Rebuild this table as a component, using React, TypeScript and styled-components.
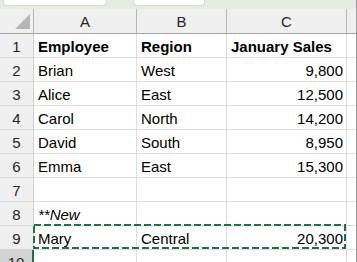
import React from "react";
import styled, { createGlobalStyle } from "styled-components";

const GlobalStyle = createGlobalStyle`
  html, body {
    margin: 0;
    padding: 0;
    background: #ffffff;
    overflow: hidden;
  }
  * { box-sizing: border-box; }
`;

const Frame = styled.div`
  width: 357px;
  height: 262px;
  overflow: hidden;
  border-right: 1px solid #9c9c9c;
  font-family: "Liberation Sans", Arial, sans-serif;
  background: #ffffff;
`;

const TopStrip = styled.div`
  height: 9px;
  background: #e5ede3;
  display: flex;
  align-items: flex-start;
  padding-left: 3px;
  gap: 26px;
`;

const StripBox = styled.div<{ $w: number }>`
  width: ${(p) => p.$w}px;
  height: 6px;
  background: #ffffff;
  border: 1px solid #d3d8d2;
  border-top: none;
  border-radius: 0 0 4px 4px;
`;

const Sheet = styled.div`
  position: relative;
  display: grid;
  grid-template-columns: 34px 103px 90px 120px 9px;
  grid-template-rows: 25px;
  grid-auto-rows: 24px;
`;

const Corner = styled.div`
  background: #f0f0f0;
  border-right: 1px solid #b8b8b8;
  border-bottom: 1px solid #a3a3a3;
  display: flex;
  align-items: flex-start;
  justify-content: flex-start;
`;

const ColHeader = styled.div<{ $last?: boolean }>`
  background: #f0f0f0;
  border-right: ${(p) => (p.$last ? "none" : "1px solid #b8b8b8")};
  border-bottom: 1px solid #a3a3a3;
  color: #262626;
  font-size: 15px;
  line-height: 22px;
  padding-top: 2px;
  text-align: center;
`;

const RowHeader = styled.div<{ $active?: boolean }>`
  background: ${(p) => (p.$active ? "#d3d3d3" : "#f0f0f0")};
  border-right: ${(p) => (p.$active ? "2px solid #1e7145" : "1px solid #cdcdcd")};
  border-bottom: 1px solid #d6d6d6;
  color: #262626;
  font-size: 15px;
  line-height: 20px;
  padding-top: 3px;
  text-align: center;
`;

const Cell = styled.div<{ $align?: "left" | "right"; $bold?: boolean; $italic?: boolean; $last?: boolean }>`
  border-right: ${(p) => (p.$last ? "none" : "1px solid #dedede")};
  border-bottom: 1px solid #dedede;
  color: #000000;
  font-size: 15px;
  line-height: 20px;
  padding: 3px 3px 0 4px;
  white-space: nowrap;
  overflow: hidden;
  text-align: ${(p) => p.$align ?? "left"};
  font-weight: ${(p) => (p.$bold ? 700 : 400)};
  font-style: ${(p) => (p.$italic ? "italic" : "normal")};
`;

const MarchingAnts = styled.svg`
  position: absolute;
  left: 33px;
  top: 215px;
  width: 313px;
  height: 25px;
  pointer-events: none;
`;

type Row = { a: string; b: string; c: string; bold?: boolean; italic?: boolean };

const rows: Row[] = [
  { a: "Employee", b: "Region", c: "January Sales", bold: true },
  { a: "Brian", b: "West", c: "9,800" },
  { a: "Alice", b: "East", c: "12,500" },
  { a: "Carol", b: "North", c: "14,200" },
  { a: "David", b: "South", c: "8,950" },
  { a: "Emma", b: "East", c: "15,300" },
  { a: "", b: "", c: "" },
  { a: "**New", b: "", c: "", italic: true },
  { a: "Mary", b: "Central", c: "20,300" },
  { a: "", b: "", c: "" },
];

export default function App() {
  return (
    <>
      <GlobalStyle />
      <Frame>
        <TopStrip>
          <StripBox $w={104} />
          <StripBox $w={72} />
        </TopStrip>
        <Sheet>
          <Corner>
            <svg width="33" height="24" viewBox="0 0 33 24">
              <polygon points="15,20 30,20 30,5" fill="#b5b5b5" />
            </svg>
          </Corner>
          <ColHeader>A</ColHeader>
          <ColHeader>B</ColHeader>
          <ColHeader>C</ColHeader>
          <ColHeader $last />
          {rows.map((r, i) => (
            <React.Fragment key={i}>
              <RowHeader $active={i === 9}>{i + 1}</RowHeader>
              <Cell $bold={r.bold} $italic={r.italic}>{r.a}</Cell>
              <Cell $bold={r.bold}>{r.b}</Cell>
              <Cell $bold={r.bold} $align={r.bold ? "left" : "right"}>{r.c}</Cell>
              <Cell $last />
            </React.Fragment>
          ))}
          <MarchingAnts viewBox="0 0 313 25">
            <rect x="1" y="1" width="311" height="23" fill="none" stroke="#1e7145" strokeWidth="2" strokeDasharray="7 3" />
          </MarchingAnts>
        </Sheet>
      </Frame>
    </>
  );
}
